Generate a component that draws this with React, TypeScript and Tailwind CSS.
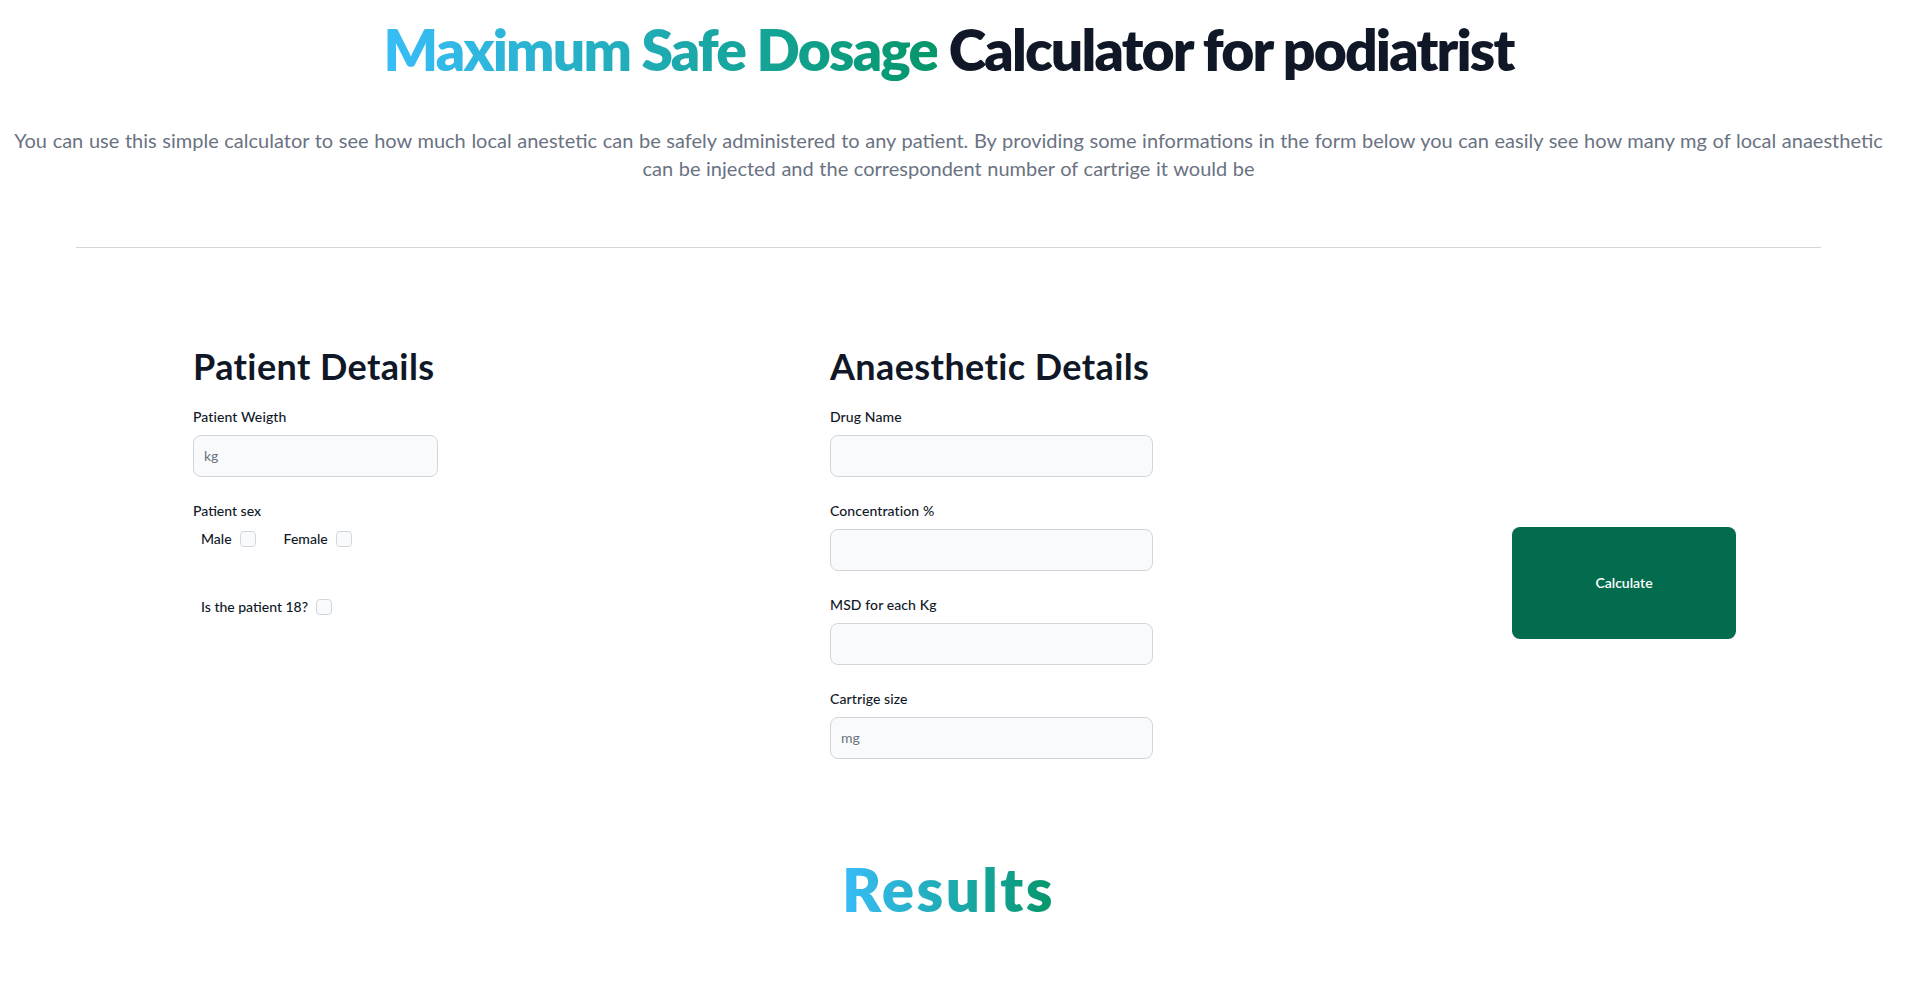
import React from "react";

const Field = ({
  label,
  placeholder,
  width,
}: {
  label: string;
  placeholder?: string;
  width: string;
}) => {
  return (
    <div className="mb-6">
      <label className="mb-2 block text-sm font-medium tracking-[0.1px] text-gray-900">{label}</label>
      <input
        type="text"
        placeholder={placeholder}
        className={`block ${width} rounded-lg border border-gray-300 bg-gray-50 p-2.5 text-sm text-gray-900 placeholder:text-gray-500`}
      />
    </div>
  );
};

const Check = () => (
  <input
    type="checkbox"
    className="ml-2 h-4 w-4 appearance-none rounded border border-gray-300 bg-gray-50"
  />
);

const App = () => {
  return (
    <div className="min-h-screen w-[1897px] bg-white font-['Lato',sans-serif]">
      <h1 className="pt-[21px] text-center text-[57px] font-extrabold leading-none tracking-[-0.032em] text-gray-900">
        <span className="bg-gradient-to-r from-[#38bdf8] to-[#059669] bg-clip-text text-transparent">
          Maximum Safe Dosage
        </span>{" "}
        Calculator for podiatrist
      </h1>

      <p className="mt-[48px] text-center text-xl text-gray-500 [word-spacing:0.5px]">
        You can use this simple calculator to see how much local anestetic can be safely
        administered to any patient. By providing some informations in the form below you
        can easily see how many mg of local anaesthetic can be injected and the
        correspondent number of cartrige it would be
      </p>

      <hr className="mx-[76px] mt-[65px] border-gray-300" />

      <div className="mt-[98px] flex pl-[193px]">
        <div className="w-[637px]">
          <h2 className="mb-[21px] whitespace-nowrap text-4xl font-bold tracking-[0.4px] text-gray-900">
            Patient Details
          </h2>
          <Field label="Patient Weigth" placeholder="kg" width="w-[245px]" />
          <label className="mb-2 block text-sm font-medium text-gray-900">Patient sex</label>
          <div className="ml-2 flex items-center text-sm font-medium text-gray-900">
            <span>Male</span>
            <Check />
            <span className="ml-7">Female</span>
            <Check />
          </div>
          <div className="ml-2 mt-12 flex items-center text-sm font-medium text-gray-900">
            <span>Is the patient 18?</span>
            <Check />
          </div>
        </div>

        <div className="w-[323px]">
          <h2 className="mb-[21px] whitespace-nowrap text-4xl font-bold tracking-[0.4px] text-gray-900">
            Anaesthetic Details
          </h2>
          <Field label="Drug Name" width="w-full" />
          <Field label="Concentration %" width="w-full" />
          <Field label="MSD for each Kg" width="w-full" />
          <Field label="Cartrige size" placeholder="mg" width="w-full" />
        </div>

        <div className="ml-[359px] mt-[181px]">
          <button
            type="button"
            className="h-[112px] w-[224px] rounded-lg bg-[#046c4e] text-sm font-semibold text-white"
          >
            Calculate
          </button>
        </div>
      </div>

      <h2 className="mt-[76px] pb-10 text-center text-6xl font-extrabold leading-none tracking-[2.4px]">
        <span className="bg-gradient-to-r from-[#38bdf8] to-[#059669] bg-clip-text text-transparent">
          Results
        </span>
      </h2>
    </div>
  );
};

export default App;
